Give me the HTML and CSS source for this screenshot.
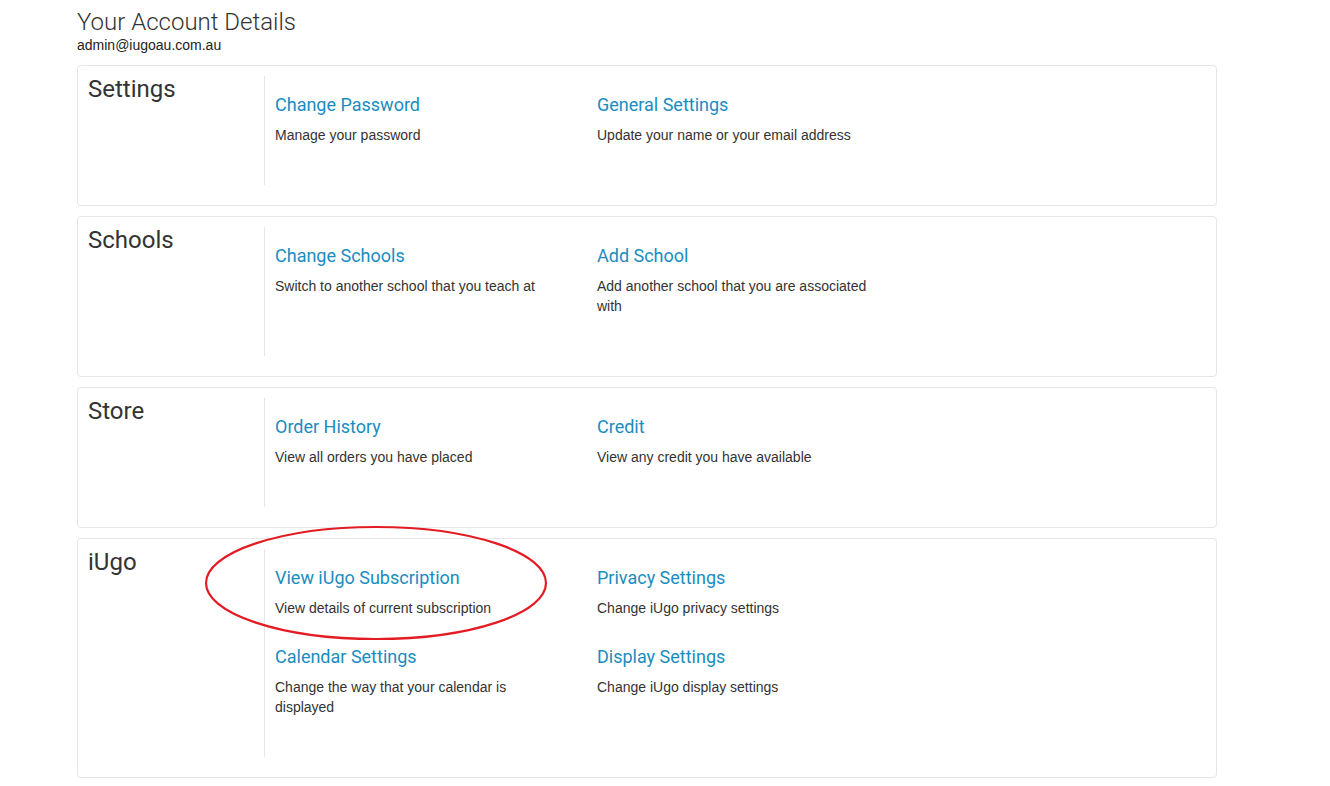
FILE: index.html
```html
<!DOCTYPE html>
<html>
<head>
    <title>Your Account Details</title>
    <link rel="stylesheet" href="styles.css">
</head>
<body>
    <div class="container">
        <h1 class="page-title">Your Account Details</h1>
        <div class="account-email">admin@iugoau.com.au</div>

        <div class="panel">
            <h2 class="panel-title">Settings</h2>
            <div class="panel-links">
                <div class="link-item">
                    <a href="#">Change Password</a>
                    <p>Manage your password</p>
                </div>
                <div class="link-item">
                    <a href="#">General Settings</a>
                    <p>Update your name or your email address</p>
                </div>
            </div>
        </div>

        <div class="panel">
            <h2 class="panel-title">Schools</h2>
            <div class="panel-links">
                <div class="link-item">
                    <a href="#">Change Schools</a>
                    <p>Switch to another school that you teach at</p>
                </div>
                <div class="link-item">
                    <a href="#">Add School</a>
                    <p>Add another school that you are associated with</p>
                </div>
            </div>
        </div>

        <div class="panel">
            <h2 class="panel-title">Store</h2>
            <div class="panel-links">
                <div class="link-item">
                    <a href="#">Order History</a>
                    <p>View all orders you have placed</p>
                </div>
                <div class="link-item">
                    <a href="#">Credit</a>
                    <p>View any credit you have available</p>
                </div>
            </div>
        </div>

        <div class="panel">
            <h2 class="panel-title">iUgo</h2>
            <div class="panel-links">
                <div class="link-item">
                    <a href="#">View iUgo Subscription</a>
                    <p>View details of current subscription</p>
                </div>
                <div class="link-item">
                    <a href="#">Privacy Settings</a>
                    <p>Change iUgo privacy settings</p>
                </div>
                <div class="link-item">
                    <a href="#">Calendar Settings</a>
                    <p>Change the way that your calendar is displayed</p>
                </div>
                <div class="link-item">
                    <a href="#">Display Settings</a>
                    <p>Change iUgo display settings</p>
                </div>
            </div>
        </div>
    </div>

    <!-- annotation drawn over the page -->
    <svg class="highlight" width="350" height="122" viewBox="0 0 350 122">
        <ellipse cx="175" cy="61" rx="170" ry="56" fill="none" stroke="#e31b23" stroke-width="2.2"/>
    </svg>
</body>
</html>
```

FILE: styles.css
```css
body {
    margin: 0;
    font-family: Arial, "Liberation Sans", sans-serif;
    color: #333;
    background: #fff;
}
.container {
    width: 1140px;
    padding-left: 77px;
}
.page-title {
    font-family: Roboto, sans-serif;
    font-weight: 300;
    font-size: 24px;
    line-height: 28px;
    color: #333;
    margin: 8px 0 1px;
}
.account-email {
    font-size: 14px;
    line-height: 16px;
    color: #222;
    margin-bottom: 12px;
}
.panel {
    display: flex;
    border: 1px solid #e6e6e6;
    border-radius: 4px;
    padding: 10px 10px 20px;
    margin-bottom: 10px;
}
.panel-title {
    width: 176px;
    flex-shrink: 0;
    font-family: Roboto, sans-serif;
    font-weight: 400;
    font-size: 24px;
    line-height: 28px;
    color: #333;
    margin: -1px 0 0;
}
.panel-links {
    display: flex;
    flex-wrap: wrap;
    align-content: flex-start;
    border-left: 1px solid #e6e6e6;
    padding: 19px 0 11px 10px;
}
.link-item {
    width: 282px;
    margin-right: 40px;
    margin-bottom: 29px;
}
.link-item a {
    display: block;
    font-family: Roboto, sans-serif;
    font-size: 18px;
    line-height: 20px;
    color: #1a8dc0;
    text-decoration: none;
    margin-bottom: 10px;
}
.link-item p {
    margin: 0;
    font-size: 14px;
    line-height: 20px;
    color: #333;
}
.highlight {
    position: absolute;
    left: 201px;
    top: 522px;
}
```
